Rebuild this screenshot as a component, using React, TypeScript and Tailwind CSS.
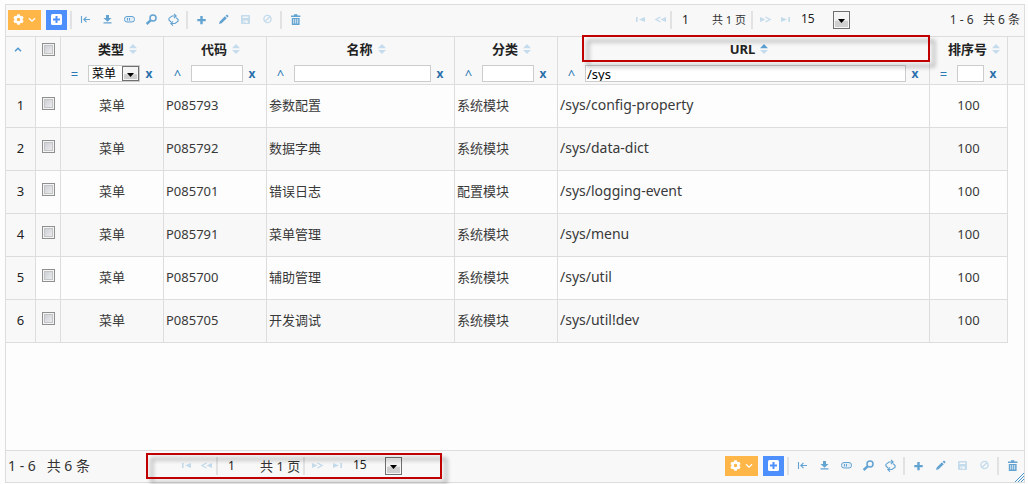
import type { ReactNode } from "react";
import { FaCog } from "react-icons/fa";

type IconName =
  | "start" | "download" | "battery" | "search" | "refresh"
  | "plus" | "pencil" | "save" | "ban" | "trash"
  | "first" | "prev" | "next" | "last";

const shapes: Record<IconName, ReactNode> = {
  start: <path d="M3.5 4v7M6 7.5h6M8.5 4.8L5.8 7.5l2.7 2.7" fill="none" stroke="currentColor" strokeWidth="1.1" />,
  download: (
    <path d="M6 3h3v3h2.5L7.5 9.7L3.5 6H6zM3.5 10.2h8v1.3h-8z" fill="currentColor" />
  ),
  battery: (
    <g fill="none" stroke="currentColor">
      <rect x="2.5" y="4.5" width="10" height="5.5" rx="2.5" fill="#e3eef7" />
      <path d="M5.5 6v2.5M7.5 6v2.5" />
    </g>
  ),
  search: (
    <g fill="none" stroke="currentColor">
      <circle cx="9" cy="6" r="3" strokeWidth="1.5" />
      <path d="M6.6 8.4L2.6 12" strokeWidth="2.4" />
    </g>
  ),
  refresh: (
    <g fill="none" stroke="currentColor" strokeWidth="1.1">
      <path d="M5 10L2.9 7.9V6.4L6 4h4M8 1.8L10.2 4L8 6.2" />
      <path d="M10 5.6l2.1 2v1.6L9 11.5H5M7 9.3l-2.2 2.2L7 13.7" />
    </g>
  ),
  plus: <path d="M6.3 4h2.4v3h3v2.2h-3v3H6.3v-3h-3V7h3z" fill="currentColor" />,
  pencil: (
    <path d="M3 12l.7-2.6l5.2-5.1l1.9 1.9l-5.2 5.1zM9.6 3.7l1-.9q.4-.3.8 0l1 1q.3.4 0 .8l-.9 1z" fill="currentColor" />
  ),
  save: (
    <g>
      <path d="M3 4q0-1 1-1h7q1 0 1 1v7q0 1-1 1H4q-1 0-1-1z" fill="currentColor" />
      <path d="M4.6 4.6h5.8V6H4.6zM5.4 8.6h4.2V11H5.4z" fill="#f8f8f8" />
      <path d="M6.2 9.2h1.2V11H6.2z" fill="currentColor" />
    </g>
  ),
  ban: (
    <g fill="none" stroke="currentColor" strokeWidth="1.4">
      <circle cx="7.5" cy="7" r="3.6" />
      <path d="M5 9.6l5-5.2" />
    </g>
  ),
  trash: (
    <g>
      <path d="M3 3.5h9.4v1.6H3zM6 2.2h3.4v1.3H6zM3.8 6h7.8v6.4q0 .6-.6.6H4.4q-.6 0-.6-.6z" fill="currentColor" />
      <path d="M5.7 7v4.6M7.7 7v4.6M9.7 7v4.6" stroke="#f8f8f8" strokeWidth="0.8" />
    </g>
  ),
  first: <path d="M3 5h1.6v5H3zM12 5v5L6 7.5z" fill="currentColor" />,
  prev: (
    <g>
      <path d="M13 5v5L7.5 7.5z" fill="currentColor" />
      <path d="M7.5 5L3 7.5L7.5 10" fill="none" stroke="currentColor" strokeWidth="1.4" />
    </g>
  ),
  next: (
    <g>
      <path d="M2 5v5l5.5-2.5z" fill="currentColor" />
      <path d="M7.5 5L12 7.5L7.5 10" fill="none" stroke="currentColor" strokeWidth="1.4" />
    </g>
  ),
  last: <path d="M10.4 5H12v5h-1.6zM3 5v5l6-2.5z" fill="currentColor" />,
};

function Icon({ name }: { name: IconName }) {
  return (
    <svg viewBox="0 0 15 15" className="size-[15px]" aria-hidden="true">
      {shapes[name]}
    </svg>
  );
}

function ToolButton({ name, label, disabled = false }: { name: IconName; label: string; disabled?: boolean }) {
  return (
    <button
      type="button"
      aria-label={label}
      disabled={disabled}
      className="flex h-5 w-[22px] items-center justify-center text-[#62a3d2] disabled:text-[#c4dbec]"
    >
      <Icon name={name} />
    </button>
  );
}

function Separator() {
  return <span className="mx-[2px] h-[18px] w-[2px] shrink-0 bg-[#e2e2e2]" />;
}

function Actions() {
  return (
    <div className="flex items-center">
      <button type="button" aria-label="设置" className="flex h-5 w-[33px] items-center justify-center gap-1 bg-[#ffb648] text-white">
        <FaCog className="size-[11px]" />
        <svg viewBox="0 0 8 6" className="h-[6px] w-2" aria-hidden="true">
          <path d="M1 1.2l3 3l3-3" fill="none" stroke="currentColor" strokeWidth="1.3" />
        </svg>
      </button>
      <button type="button" aria-label="新建" className="mr-px ml-[5px] flex h-5 w-[21px] items-center justify-center bg-[#4c8ffd]">
        <svg viewBox="0 0 11 11" className="size-[11px]" aria-hidden="true">
          <rect width="11" height="11" rx="1.5" fill="#fff" />
          <path d="M4.5 2h2v2.5H9v2H6.5V9h-2V6.5H2v-2h2.5z" fill="#4c8ffd" />
        </svg>
      </button>
      <Separator />
      <ToolButton name="start" label="收起" />
      <ToolButton name="download" label="导出" />
      <ToolButton name="battery" label="列设置" />
      <ToolButton name="search" label="查询" />
      <ToolButton name="refresh" label="刷新" />
      <Separator />
      <ToolButton name="plus" label="添加" />
      <ToolButton name="pencil" label="编辑" />
      <ToolButton name="save" label="保存" disabled />
      <ToolButton name="ban" label="取消" disabled />
      <Separator />
      <ToolButton name="trash" label="删除" />
    </div>
  );
}

function DropArrow({ className }: { className: string }) {
  return (
    <span
      className={`pointer-events-none absolute flex items-end justify-center border border-[#6f6f6f] bg-linear-to-b from-[#f4f4f4] from-50% to-[#cfcfcf] to-60% shadow-[inset_0_0_0_1px_#f6f6f6] ${className}`}
    >
      <svg viewBox="0 0 7 4" className="h-1 w-[7px]" aria-hidden="true">
        <path d="M0 0h7L3.5 4z" fill="#000" />
      </svg>
    </span>
  );
}

function Pager({ large = false }: { large?: boolean }) {
  return (
    <div className="flex items-center">
      <button type="button" disabled aria-label="首页" className="flex w-5 justify-end text-[#c4dbec]"><Icon name="first" /></button>
      <button type="button" disabled aria-label="上一页" className="flex w-5 justify-end text-[#c4dbec]"><Icon name="prev" /></button>
      <Separator />
      <input
        type="text"
        aria-label="页码"
        defaultValue="1"
        className={`h-5 bg-transparent pl-2 text-[12px] text-[#222] outline-none ${large ? "w-10" : "w-[38px]"}`}
      />
      <span className={`whitespace-nowrap text-[#333] ${large ? "w-[41px] text-[13px]" : "w-[37px] text-[11px]"}`}>共 1 页</span>
      <Separator />
      <button type="button" disabled aria-label="下一页" className="flex w-5 justify-center text-[#c4dbec]"><Icon name="next" /></button>
      <button type="button" disabled aria-label="末页" className="flex w-5 justify-center text-[#c4dbec]"><Icon name="last" /></button>
      <span className="relative ml-[6px] flex h-[18px] w-[49px]">
        <select aria-label="每页条数" defaultValue="15" className="h-4 w-full appearance-none bg-transparent text-[12px] leading-4 text-[#222] outline-none">
          <option>15</option>
          <option>50</option>
          <option>100</option>
        </select>
        <DropArrow className="top-0 right-0 h-[18px] w-[17px] pb-[5px]" />
      </span>
    </div>
  );
}

function CheckBox({ label }: { label: string }) {
  return (
    <input
      type="checkbox"
      aria-label={label}
      className="block size-[13px] appearance-none border border-[#8e8f8f] bg-linear-to-br from-[#c4c8cf] to-[#f3f3f3] shadow-[inset_0_0_0_1px_#f4f4f4,inset_0_0_0_2px_#c2c4c6]"
    />
  );
}

function SortMark({ ascending = false }: { ascending?: boolean }) {
  return (
    <svg viewBox="0 0 8 10" className="h-[10px] w-2" aria-hidden="true">
      <path d="M0 4.3L4 0l4 4.3z" fill={ascending ? "#5b9fd0" : "#c5dcee"} />
      <path d="M0 5.9L4 10l4-4.1z" fill="#c5dcee" />
    </svg>
  );
}

function Callout({ className }: { className: string }) {
  return (
    <span
      className={`pointer-events-none absolute z-10 border-2 border-[#c00000] drop-shadow-[5px_5px_2px_rgba(0,0,0,0.35)] ${className}`}
    />
  );
}

type Column = { title: string; op: string; value?: string; select?: boolean; highlighted?: boolean };

const columns: Column[] = [
  { title: "类型", op: "=", select: true },
  { title: "代码", op: "^" },
  { title: "名称", op: "^" },
  { title: "分类", op: "^" },
  { title: "URL", op: "^", value: "/sys", highlighted: true },
  { title: "排序号", op: "=" },
];

const rows = [
  ["P085793", "参数配置", "系统模块", "/sys/config-property"],
  ["P085792", "数据字典", "系统模块", "/sys/data-dict"],
  ["P085701", "错误日志", "配置模块", "/sys/logging-event"],
  ["P085791", "菜单管理", "系统模块", "/sys/menu"],
  ["P085700", "辅助管理", "系统模块", "/sys/util"],
  ["P085705", "开发调试", "系统模块", "/sys/util!dev"],
];

function HeaderCell({ column }: { column: Column }) {
  return (
    <th scope="col" className="relative h-12 border-r border-b border-[#dddddd] bg-[#f8f8f8] p-0 align-top">
      <div className="flex h-6 items-center justify-center gap-[5px] pl-[11px] font-bold text-[#222]">
        <span>{column.title}</span>
        <SortMark ascending={column.highlighted} />
      </div>
      <div className="flex items-center pt-1 pr-[5px] font-normal">
        <button type="button" aria-label={`${column.title} 条件`} className="w-[27px] shrink-0 leading-4 text-[#2a79b5]">
          {column.op}
        </button>
        {column.select ? (
          <span className="relative flex h-[17px] min-w-0 flex-1 border border-[#cccccc] bg-white">
            <select aria-label={column.title} className="w-full appearance-none bg-transparent pl-[3px] text-[12px] leading-[15px] text-black outline-none">
              <option>菜单</option>
            </select>
            <DropArrow className="top-0 right-0 h-[15px] w-[17px] pb-[3px]" />
          </span>
        ) : (
          <input
            type="text"
            aria-label={column.title}
            defaultValue={column.value}
            className="h-[17px] min-w-0 flex-1 border border-[#cccccc] bg-white px-px text-[13px] leading-[15px] text-black outline-none"
          />
        )}
        <button type="button" aria-label={`清除 ${column.title}`} className="w-[18px] shrink-0 text-[12px] leading-4 font-bold text-[#2a70ac]">
          x
        </button>
      </div>
      {column.highlighted && <Callout className="-top-[2px] -right-px left-6 h-[27px]" />}
    </th>
  );
}

export default function App() {
  const cell = "h-[43px] border-r border-b border-[#dddddd] pt-0 pb-[2px]";
  return (
    <main className="bg-[#fdfdfd] pt-1 pr-[3px] pb-px pl-[5px] font-['Noto_Sans','Noto_Sans_CJK_SC',sans-serif] text-[13px] leading-5 text-[#393939]">
      <div className="relative border border-[#dddddd]">
        <div className="flex h-8 items-center border-b border-[#dddddd] bg-[#f8f8f8] pr-1 pb-[2px] pl-[2px]">
          <div className="flex-1"><Actions /></div>
          <Pager />
          <div className="w-[170px] text-right text-[12px] whitespace-pre text-[#333]">1 - 6   共 6 条</div>
        </div>

        <div className="min-h-[413px]">
          <table className="w-full table-fixed border-separate border-spacing-0">
            <colgroup>
              <col className="w-[30px]" />
              <col className="w-[25px]" />
              <col className="w-[103px]" />
              <col className="w-[103px]" />
              <col className="w-[188px]" />
              <col className="w-[103px]" />
              <col />
              <col className="w-[78px]" />
              <col className="w-4" />
            </colgroup>
            <thead>
              <tr>
                <th className="border-r border-b border-[#dddddd] bg-[#f8f8f8] p-0 align-top">
                  <button type="button" aria-label="折叠" className="flex h-6 w-full items-center justify-center pr-[6px]">
                    <svg viewBox="0 0 8 5" className="h-[5px] w-2" aria-hidden="true">
                      <path d="M1 4.2l3-3l3 3" fill="none" stroke="#4a94cc" strokeWidth="1.4" />
                    </svg>
                  </button>
                </th>
                <th className="border-r border-b border-[#dddddd] bg-[#f8f8f8] px-[6px] pt-[6px] pb-0 align-top">
                  <CheckBox label="全选" />
                </th>
                {columns.map((column) => <HeaderCell key={column.title} column={column} />)}
                <th className="border-b border-[#dddddd] bg-[#f8f8f8] p-0" />
              </tr>
            </thead>
            <tbody>
              {rows.map(([code, name, category, url], index) => {
                const shade = index % 2 === 1 ? "bg-[#f8f8f8]" : "";
                return (
                  <tr key={code}>
                    <td className={`${cell} bg-[#f8f8f8] px-0 text-center text-[#222]`}>{index + 1}</td>
                    <td className={`${cell} ${shade} px-[6px]`}>
                      <div className="pb-1"><CheckBox label={`选择 ${name}`} /></div>
                    </td>
                    <td className={`${cell} ${shade} px-0 text-center`}>菜单</td>
                    <td className={`${cell} ${shade} px-[2px]`}>{code}</td>
                    <td className={`${cell} ${shade} px-[2px]`}>{name}</td>
                    <td className={`${cell} ${shade} px-[2px]`}>{category}</td>
                    <td className={`${cell} ${shade} px-[2px] text-[14px]`}>{url}</td>
                    <td className={`${cell} ${shade} px-0 text-center`}>100</td>
                    <td className="p-0" />
                  </tr>
                );
              })}
            </tbody>
          </table>
        </div>

        <div className="flex h-8 items-center border-t border-[#dddddd] bg-[#f8f8f8] pr-px pb-[2px] pl-[2px]">
          <div className="w-[166px] text-[14px] whitespace-pre text-[#333]">1 - 6   共 6 条</div>
          <Pager large />
          <div className="ml-auto"><Actions /></div>
        </div>
        <Callout className="bottom-[3px] left-[140px] h-[26px] w-[296px]" />
        <svg viewBox="0 0 9 9" className="absolute right-0 bottom-0 size-[9px]" aria-hidden="true">
          <path d="M0 9L9 0M3 9L9 3M6 9L9 6" stroke="#4a94cc" strokeWidth="1" />
        </svg>
      </div>
    </main>
  );
}
